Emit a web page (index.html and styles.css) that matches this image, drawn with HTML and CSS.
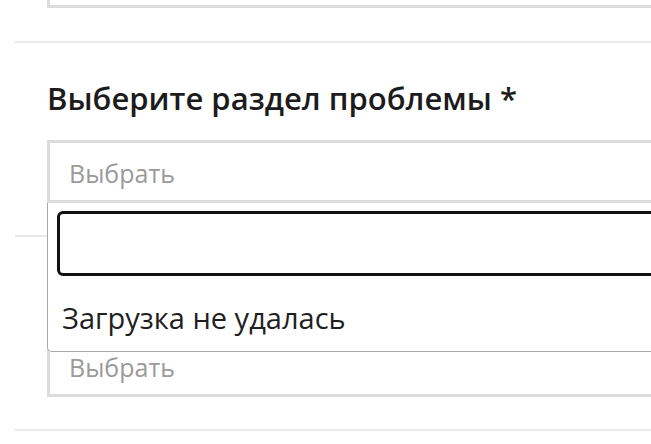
FILE: index.html
```html
<!DOCTYPE html>
<html lang="ru">
<head>
<meta charset="utf-8">
<title>Форма</title>
<link rel="stylesheet" href="styles.css">
</head>
<body>
<div class="page">
  <div class="field field-top">
    <div class="select"><span class="placeholder">Выбрать</span></div>
  </div>
  <section class="field">
    <h2 class="label">Выберите раздел проблемы *</h2>
    <div class="select-wrap">
      <div class="select"><span class="placeholder">Выбрать</span></div>
      <div class="dropdown">
        <div class="search"><input class="search-input" type="text" aria-label="Поиск"></div>
        <div class="message">Загрузка не удалась</div>
      </div>
    </div>
  </section>
  <section class="field">
    <h2 class="label">Выберите подраздел *</h2>
    <div class="select-wrap">
      <div class="select"><span class="placeholder">Выбрать</span></div>
    </div>
  </section>
  <section class="field"></section>
</div>
</body>
</html>
```

FILE: styles.css
```css
html, body {
  margin: 0;
  padding: 0;
  background: #fff;
  overflow: hidden;
}
body {
  font-family: "Open Sans", "Noto Sans", sans-serif;
  color: #1f1f1f;
}
.page {
  width: 1000px;
  padding-left: 15px;
  margin-top: -55px;
}
.field {
  border-top: 2px solid #e9e9eb;
  padding: 0 0 32px 32px;
}
.field-top {
  border-top: none;
  padding-bottom: 33px;
}
.label {
  margin: 35px 0 22px 0;
  font-size: 31px;
  line-height: 40px;
  font-weight: 600;
  color: #1c1c1c;
}
.select-wrap {
  position: relative;
}
.select {
  height: 57px;
  border: 3px solid #dcdcdc;
  border-right: none;
  display: flex;
  align-items: center;
  padding-left: 19px;
  box-sizing: content-box;
}
.placeholder {
  font-size: 25px;
  line-height: 30px;
  color: #9a9a9a;
  position: relative;
  top: 1px;
}
.dropdown {
  position: absolute;
  left: 0;
  top: 63px;
  width: 960px;
  height: 149px;
  box-sizing: border-box;
  background: #fff;
  border: 1px solid #a8a8a8;
  border-top: none;
  border-radius: 0 0 5px 5px;
  padding: 8px 0 0 9px;
  z-index: 2;
}
.search {
  display: flex;
}
.search-input {
  flex: 1;
  height: 65px;
  box-sizing: border-box;
  border: 3px solid #111;
  border-radius: 6px;
  outline: none;
  margin: 0;
  padding: 0 10px;
  font: inherit;
}
.message {
  font-size: 29px;
  line-height: 36px;
  color: #1f1f1f;
  padding: 24px 0 0 5px;
}
```
